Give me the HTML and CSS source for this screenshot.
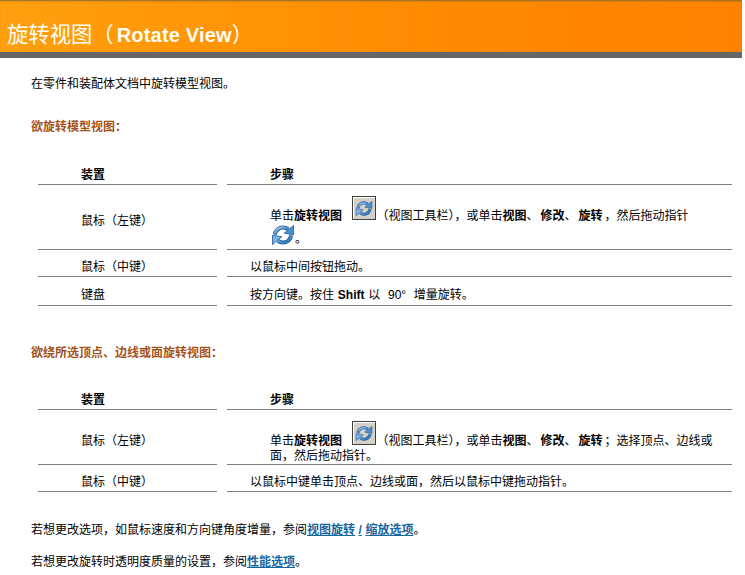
FILE: index.html
```html
<!DOCTYPE html>
<html lang="zh-CN">
<head>
<meta charset="utf-8">
<title>旋转视图（Rotate View）</title>
<link rel="stylesheet" href="styles.css">
</head>
<body>
<svg class="defs" width="0" height="0" aria-hidden="true">
  <defs>
    <linearGradient id="blue" x1="0" y1="0" x2="1" y2="1">
      <stop offset="0" stop-color="#b4d8f4"/>
      <stop offset=".55" stop-color="#4a90d0"/>
      <stop offset="1" stop-color="#2a6cb0"/>
    </linearGradient>
    <symbol id="rotate" viewBox="0 0 24 22">
      <g fill="none" stroke-linecap="butt">
        <path d="M3.800 10.500C4.800 6 8.200 3.400 12 3.400c1.900 0 3.600 .6 5 1.700" stroke="#1c5594" stroke-width="4"/>
        <path d="M20.200 11.500C19.200 16 15.800 18.600 12 18.600c-1.900 0-3.600-.6-5-1.700" stroke="#1c5594" stroke-width="4"/>
        <path d="M3.800 10.500C4.800 6 8.200 3.400 12 3.400c1.900 0 3.600 .6 5 1.700" stroke="url(#blue)" stroke-width="2.400"/>
        <path d="M20.200 11.500C19.200 16 15.800 18.600 12 18.600c-1.900 0-3.600-.6-5-1.700" stroke="url(#blue)" stroke-width="2.400"/>
      </g>
      <path d="M22.500 1.500v9.300l-9.300-1.600z" fill="#4a90d0" stroke="#1c5594" stroke-width=".8"/>
      <path d="M1.500 20.500v-9.300l9.300 1.600z" fill="#7db4e4" stroke="#1c5594" stroke-width=".8"/>
    </symbol>
  </defs>
</svg>
<header class="banner">
  <h1 class="banner-title">旋转视图（<span class="latin">Rotate View</span>）</h1>
</header>
<main class="content">
  <p class="intro">在零件和装配体文档中旋转模型视图。</p>

  <h2 class="section-title first">欲旋转模型视图：</h2>
  <div class="steps steps-a">
    <div class="cell head device">装置</div>
    <div class="cell head step">步骤</div>
    <div class="cell device r-tall"><span>鼠标<span class="paren">（</span>左键<span class="paren">）</span></span></div>
    <div class="cell step r-tall top">
      <div class="rich">
        <div>单击<b>旋转视图</b> <span class="tool"><svg class="tool-glyph"><use href="#rotate"/></svg></span><span class="paren">（</span>视图工具栏<span class="paren">）</span>，或单击<b>视图</b>、<b>修改</b>、<b>旋转</b>，然后拖动指针</div>
        <div class="cursor-line"><svg class="cursor"><use href="#rotate"/></svg>。</div>
      </div>
    </div>
    <div class="cell device r-mid"><span>鼠标<span class="paren">（</span>中键<span class="paren">）</span></span></div>
    <div class="cell plain r-mid">以鼠标中间按钮拖动。</div>
    <div class="cell device r-key">键盘</div>
    <div class="cell plain r-key"><span>按方向键。按住 <b>Shift</b> 以&nbsp; 90°&nbsp; 增量旋转。</span></div>
  </div>

  <h2 class="section-title second">欲绕所选顶点、边线或面旋转视图：</h2>
  <div class="steps steps-b">
    <div class="cell head device">装置</div>
    <div class="cell head step">步骤</div>
    <div class="cell device r-two"><span>鼠标<span class="paren">（</span>左键<span class="paren">）</span></span></div>
    <div class="cell step r-two top">
      <div class="rich wrap">单击<b>旋转视图</b> <span class="tool"><svg class="tool-glyph"><use href="#rotate"/></svg></span><span class="paren">（</span>视图工具栏<span class="paren">）</span>，或单击<b>视图</b>、<b>修改</b>、<b>旋转</b>；选择顶点、边线或面，然后拖动指针。</div>
    </div>
    <div class="cell device r-mid"><span>鼠标<span class="paren">（</span>中键<span class="paren">）</span></span></div>
    <div class="cell plain r-mid">以鼠标中键单击顶点、边线或面，然后以鼠标中键拖动指针。</div>
  </div>

  <p class="note note-a">若想更改选项，如鼠标速度和方向键角度增量，参阅<a href="#">视图旋转<span class="slash">/</span>缩放选项</a>。</p>
  <p class="note note-b">若想更改旋转时透明度质量的设置，参阅<a href="#">性能选项</a>。</p>
</main>
</body>
</html>
```
FILE: styles.css
```css
* { box-sizing: border-box; }
html, body { margin: 0; padding: 0; background: #fff; }
body {
  width: 745px;
  height: 575px;
  overflow: hidden;
  color: #000;
  font: 12px/14px "Liberation Sans", "Noto Sans CJK SC", sans-serif;
}
.defs { position: absolute; }
.banner {
  width: 742px;
  height: 58px;
  padding-top: 21px;
  border-bottom: 6px solid #666;
  background: linear-gradient(90deg, #ffa00e 0, #ff8a00 60%, #ff8300 100%);
  box-shadow: inset 0 2px 2px -1px #8a6a30;
}
.banner-title {
  margin: 0 0 0 7px;
  font: 400 21.33px/23px "Noto Sans CJK SC", sans-serif;
  color: #fffdf5;
  white-space: nowrap;
}
.latin {
  margin-left: 3px;
  font: 700 20px/23px "Liberation Sans", sans-serif;
  letter-spacing: .2px;
}
.content { padding: 0 13px 0 31px; }
.intro { margin: 19px 0 0; }
.section-title { margin: 0; font-size: 12px; line-height: 14px; font-weight: 700; color: #a5521a; }
.section-title.first { margin-top: 29px; }
.section-title.second { margin-top: 40px; }
.steps {
  display: grid;
  grid-template-columns: 179px 505px;
  column-gap: 10px;
  margin-left: 7px;
}
.steps-a { margin-top: 31px; }
.steps-b { margin-top: 30px; }
.cell {
  display: flex;
  align-items: center;
  border-bottom: 1px solid #808080;
  white-space: nowrap;
}
.device { padding-left: 43px; }
.step { padding-left: 43px; }
.plain { padding-left: 23px; }
.head { height: 20px; padding-top: 1px; font-weight: 700; }
.r-tall { height: 65px; padding-top: 6px; }
.r-two { height: 55px; padding-top: 6px; }
.r-mid { height: 27px; padding-top: 7px; }
.r-key { height: 29px; padding-top: 7px; word-spacing: .5px; }
.top { align-items: flex-start; }
.r-tall.top { padding-top: 11px; }
.r-two.top { padding-top: 11px; }
.rich { line-height: 15px; }
.rich b + b { margin-left: 2px; }
.rich b:last-of-type { margin-right: 2px; }
.wrap { width: 450px; white-space: normal; }
.tool {
  display: inline-block;
  width: 24px;
  height: 24px;
  margin-left: 7px;
  background: #d4d0c8;
  border: 1px solid #404040;
  box-shadow: inset 1px 1px 0 #fff;
}
.tool-glyph { display: block; width: 18px; height: 17px; margin: 3px 2px; }
.cursor-line { line-height: 14px; }
.cursor { width: 24px; height: 22px; margin-left: 1px; vertical-align: -3px; }
.paren { font-family: "Noto Sans CJK TC", sans-serif; }
.slash { padding: 0 3.5px; }
.note { margin: 0; }
.note-a { margin-top: 31px; }
.note-b { margin-top: 18px; }
.note a { color: #15659f; font-weight: 700; text-decoration: underline; }
```
